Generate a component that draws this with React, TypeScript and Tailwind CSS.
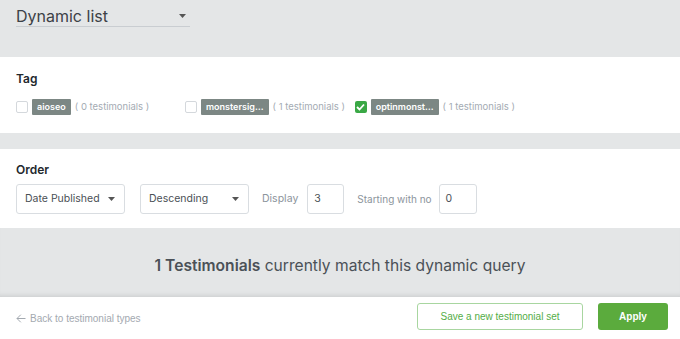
const sans = "font-['Inter','Noto_Sans',sans-serif]";
const arial = "font-['Liberation_Sans',Arial,sans-serif]";

function Caret() {
  return (
    <svg width="7" height="4" viewBox="0 0 7 4" className="shrink-0">
      <path d="M0 0h7L3.5 4z" fill="#555" />
    </svg>
  );
}

function TagItem({ name, count, checked, w }: { name: string; count: number; checked?: boolean; w: string }) {
  return (
    <div className={`flex items-center whitespace-nowrap shrink-0 ${w}`}>
      {checked ? (
        <span className="w-[12px] h-[12px] rounded-[2px] bg-[#3aa845] flex items-center justify-center">
          <svg width="9" height="8" viewBox="0 0 9 8">
            <path d="M1 4l2.5 2.5L8 1.5" stroke="#fff" strokeWidth="1.8" fill="none" />
          </svg>
        </span>
      ) : (
        <span className="w-[12px] h-[12px] rounded-[2px] border border-[#d4d8dc] bg-white" />
      )}
      <span className="ml-[4px] h-[16px] px-[5px] bg-[#7c8784] text-white text-[9px] font-semibold leading-[16px] rounded-[1px]">
        {name}
      </span>
      <span className="ml-[4px] text-[9.5px] text-[#a4abb3]">( {count} testimonials )</span>
    </div>
  );
}

function Select({ label }: { label: string }) {
  return (
    <div className="w-[109px] h-[30px] border border-[#d9dde1] rounded-[3px] flex items-center justify-between pl-[8px] pr-[9px] text-[10.5px] text-[#4a4f55] whitespace-nowrap">
      <span>{label}</span>
      <Caret />
    </div>
  );
}

export default function App() {
  return (
    <div className={`w-[680px] h-[339px] bg-[#e4e6e7] ${sans} flex flex-col overflow-hidden`}>
      {/* Header select */}
      <div className="h-[57px] px-[16px] pt-[5px]">
        <div className="w-[174px] h-[22px] border-b border-[#c9cdd1] flex items-center justify-between pr-[4px]">
          <span className="text-[16px] text-[#3c4146] leading-none">Dynamic list</span>
          <Caret />
        </div>
      </div>

      {/* Tag */}
      <div className="h-[76px] bg-white px-[16px] pt-[15px]">
        <div className="text-[12px] font-semibold text-[#23282d] leading-[14px]">Tag</div>
        <div className="flex items-center mt-[13px]">
          <TagItem name="aioseo" count={0} w="w-[169px]" />
          <TagItem name="monstersig…" count={1} w="w-[170px]" />
          <TagItem name="optinmonst…" count={1} checked w="w-[160px]" />
        </div>
      </div>

      <div className="h-[16px]" />

      {/* Order */}
      <div className="h-[79px] bg-white px-[16px] pt-[14px]">
        <div className="text-[12px] font-semibold text-[#23282d] leading-[14px]">Order</div>
        <div className="flex items-center mt-[7px] text-[10.5px] whitespace-nowrap">
          <Select label="Date Published" />
          <div className="w-[15px]" />
          <Select label="Descending" />
          <span className="ml-[13px] text-[#8c949c]">Display</span>
          <div className="ml-[9px] w-[37px] h-[30px] border border-[#d9dde1] rounded-[3px] flex items-center pl-[6px] text-[#4a4f55]">3</div>
          <span className="ml-[13px] text-[10px] text-[#8c949c]">Starting with no</span>
          <div className="ml-[7px] w-[38px] h-[30px] border border-[#d9dde1] rounded-[3px] flex items-center pl-[6px] text-[#4a4f55]">0</div>
        </div>
      </div>

      {/* Result */}
      <div className="h-[69px] flex items-end justify-center pb-[20px] shadow-[inset_0_-5px_5px_-4px_rgba(0,0,0,0.12)]">
        <div className="text-[15.6px] text-[#4b5157] whitespace-nowrap">
          <span className="font-semibold">1 Testimonials</span> currently match this dynamic query
        </div>
      </div>

      {/* Footer */}
      <div className={`flex-1 bg-white flex items-center px-[12px] ${arial}`}>
        <div className="flex items-center text-[10px] text-[#a3a9b0] ml-[4px] whitespace-nowrap">
          <svg width="10" height="9" viewBox="0 0 10 9" className="mr-[4px]">
            <path d="M9.5 4.5H1M4.8 0.7L1 4.5l3.8 3.8" stroke="#a3a9b0" strokeWidth="1" fill="none" />
          </svg>
          Back to testimonial types
        </div>
        <div className="ml-auto flex items-center gap-[15px] mb-[3px] whitespace-nowrap">
          <div className="w-[166px] h-[27px] border border-[#a8d6a0] rounded-[3px] flex items-center justify-center text-[10px] text-[#54ad47]">
            Save a new testimonial set
          </div>
          <div className="w-[70px] h-[27px] bg-[#5bab3d] rounded-[3px] flex items-center justify-center text-[10px] font-bold text-white">
            Apply
          </div>
        </div>
      </div>
    </div>
  );
}
